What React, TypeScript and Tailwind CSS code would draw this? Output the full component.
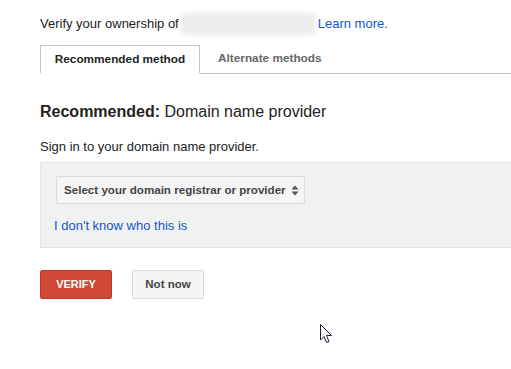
import React from "react";

export default function App() {
  return (
    <div className="w-[511px] h-[369px] bg-white overflow-hidden relative" style={{ fontFamily: '"Liberation Sans", Arial, sans-serif' }}>
      <div className="pl-[40px] pt-[13px] flex items-center text-[13px] text-[#222] h-[35px]">
        <span>Verify your ownership of</span>
        <span className="ml-[2px] mr-[2px] w-[135px] h-[22px] bg-[#ececec] blur-[2px] rounded"></span>
        <span className="text-[#1155cc]">Learn more.</span>
      </div>
      <div className="mt-[10px] ml-[40px] flex border-b border-[#c6c6c6] h-[29px]">
        <div className="w-[160px] h-[29px] -mb-px bg-white border border-[#c6c6c6] border-b-white flex items-center justify-center text-[11.8px] font-bold text-[#222]">
          Recommended method
        </div>
        <div className="ml-[18px] flex items-center text-[11.8px] font-bold text-[#666]">Alternate methods</div>
      </div>
      <div className="pl-[40px] mt-[28px] text-[16px] text-[#222] leading-[20px]">
        <span className="font-bold">Recommended:</span> Domain name provider
      </div>
      <div className="pl-[40px] mt-[17px] text-[13px] text-[#222] leading-[16px]">Sign in to your domain name provider.</div>
      <div className="ml-[40px] mt-[7px] h-[86px] bg-[#f1f1f1] border border-[#e5e5e5] border-r-0 pl-[15px] pt-[13px]">
        <div className="w-[249px] h-[28px] bg-[#f5f5f5] border border-[#dcdcdc] rounded-[2px] flex items-center pl-[7px] text-[11.6px] font-bold text-[#444]">
          <span>Select your domain registrar or provider</span>
          <svg width="8" height="11" viewBox="0 0 8 11" className="ml-[5px]">
            <path d="M4 0.5 L7.5 4.5 L0.5 4.5 Z" fill="#555" />
            <path d="M4 10.5 L7.5 6.5 L0.5 6.5 Z" fill="#555" />
          </svg>
        </div>
        <div className="mt-[14px] -ml-[2px] text-[13px] text-[#1155cc] leading-[16px]">I don't know who this is</div>
      </div>
      <div className="pl-[40px] mt-[22px] flex gap-[20px]">
        <div className="w-[72px] h-[29px] bg-[#d14836] border border-[#c53727] rounded-[2px] flex items-center justify-center text-[11px] font-bold text-white">VERIFY</div>
        <div className="w-[72px] h-[29px] bg-[#f5f5f5] border border-[#dcdcdc] rounded-[2px] flex items-center justify-center text-[11.5px] font-bold text-[#444]">Not now</div>
      </div>
      <svg className="absolute left-[320px] top-[324px]" width="13" height="20" viewBox="0 0 13 20">
        <path d="M0.5 0.5 L0.5 16 L4 12.5 L6.5 18.5 L9 17.5 L6.5 11.5 L11.5 11.5 Z" fill="white" stroke="#1a1f33" strokeWidth="1" strokeLinejoin="round" />
      </svg>
    </div>
  );
}
